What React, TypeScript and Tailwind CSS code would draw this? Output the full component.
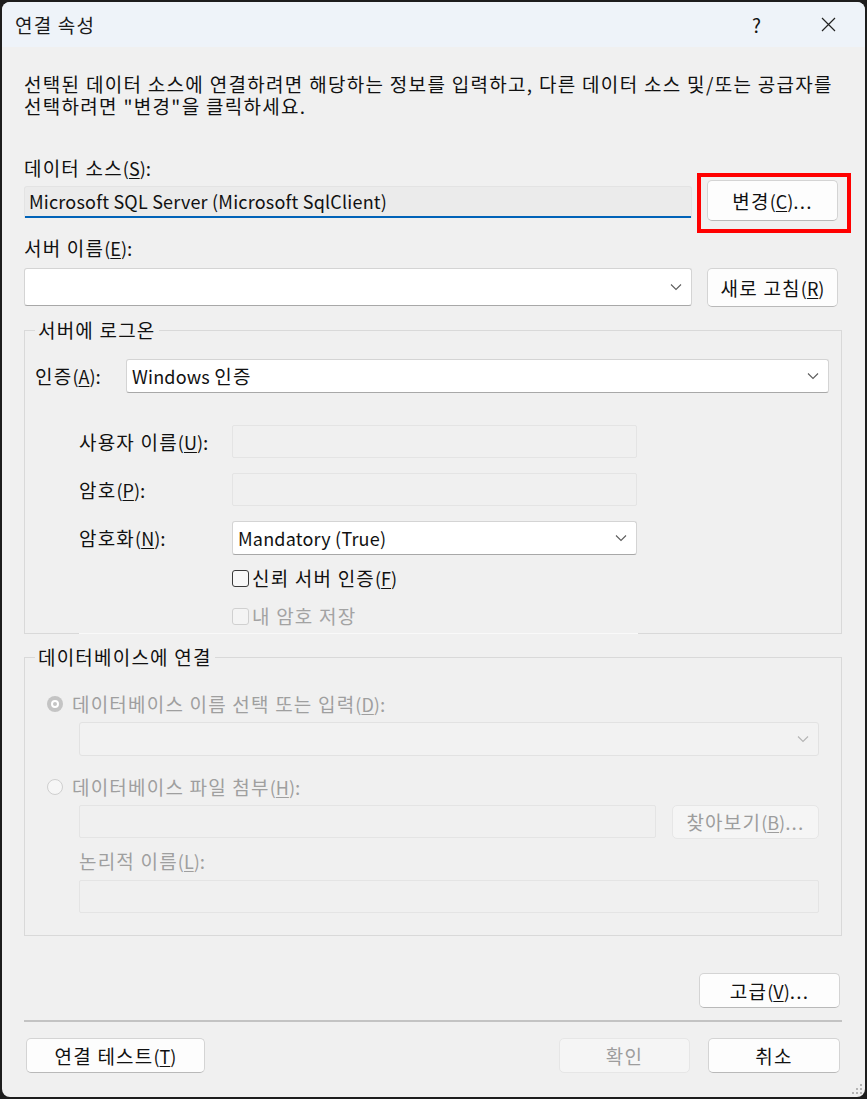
import type { ReactNode } from "react";

// Windows 11 "연결 속성" dialog

// mnemonic key, e.g. (S) with underlined letter
const K = ({ c }: { c: string }) => (
  <span className="text-[18px] tracking-normal">
    (<span className="underline underline-offset-2">{c}</span>)
  </span>
);

const Lat = ({ children }: { children: ReactNode }) => (
  <span className="text-[18px] tracking-[0.2px]">{children}</span>
);

const Chevron = ({ dim }: { dim?: boolean }) => (
  <svg width="12" height="8" viewBox="0 0 12 8">
    <path
      d="M1 1.5 L6 6.5 L11 1.5"
      fill="none"
      stroke={dim ? "#b4b4b4" : "#5c5c5c"}
      strokeWidth="1.1"
    />
  </svg>
);

const Button = ({
  children,
  className = "",
  disabled,
}: {
  children: ReactNode;
  className?: string;
  disabled?: boolean;
}) => (
  <div
    className={`flex items-center justify-center rounded-[5px] border ${
      disabled
        ? "border-[#e6e6e6] bg-[#f5f5f5] text-[#9d9d9d]"
        : "border-[#d4d4d4] border-b-[#b9b9b9] bg-[#fdfdfd] text-[#111]"
    } ${className}`}
  >
    {children}
  </div>
);

const Combo = ({
  children,
  className = "",
  disabled,
}: {
  children?: ReactNode;
  className?: string;
  disabled?: boolean;
}) => (
  <div
    className={`flex items-center justify-between rounded-[3px] border pl-[5px] pr-[9px] ${
      disabled
        ? "border-[#e2e2e2] bg-[#f2f2f2]"
        : "border-[#d4d4d4] border-b-[#a8a8a8] bg-white"
    } ${className}`}
  >
    <span className="text-[#111]">{children}</span>
    <Chevron dim={disabled} />
  </div>
);

const Box = ({ className = "" }: { className?: string }) => (
  <div className={`rounded-[2px] border border-[#e4e4e4] bg-[#f0f0f0] ${className}`} />
);

export default function App() {
  return (
    <div className="h-[1099px] w-[867px] bg-[#1d1d1d] p-[2px] font-['Noto_Sans_CJK_KR','Noto_Sans',sans-serif] text-[19px] leading-[22px] tracking-[1.2px] text-[#111]">
      <div className="relative flex h-full flex-col overflow-hidden rounded-[8px] bg-[#f0f0f0]">
        {/* title bar */}
        <div className="flex h-[45px] shrink-0 items-center bg-[#eef3f9] pl-[13px] pr-[29px]">
          <span className="text-[#1b1b1b]">연결 속성</span>
          <span className="ml-auto mr-[60px] text-[19px] tracking-normal">?</span>
          <svg width="15" height="15" viewBox="0 0 15 15">
            <path d="M1 1 L14 14 M14 1 L1 14" stroke="#222" strokeWidth="1.2" />
          </svg>
        </div>

        <div className="flex flex-col pl-[22px] pr-[23px]">
          <p className="mt-[26px] whitespace-nowrap tracking-[1.3px]">
            선택된 데이터 소스에 연결하려면 해당하는 정보를 입력하고, 다른 데이터 소스 및/또는 공급자를
            <br />
            선택하려면 "변경"을 클릭하세요.
          </p>

          <div className="mt-[40px]">
            데이터 소스<K c="S" />:
          </div>
          <div className="mt-[1px] flex items-start">
            <div className="mt-[6px] flex h-[32px] w-[668px] items-center rounded-t-[3px] border border-b-0 border-[#e3e3e3] bg-[#ebebeb] pb-[4px] pl-[4px] shadow-[inset_0_-2px_0_#0063b8]">
              <Lat>Microsoft SQL Server (Microsoft SqlClient)</Lat>
            </div>
            <div className="relative ml-[15px]">
              <Button className="h-[41px] w-[131px]">
                변경<K c="C" />...
              </Button>
              <div className="absolute left-[-10px] top-[-7px] h-[60px] w-[154px] border-[4px] border-[#ff0000]" />
            </div>
          </div>

          <div className="mt-[16px]">
            서버 이름<K c="E" />:
          </div>
          <div className="mt-[9px] flex items-start">
            <Combo className="h-[38px] w-[668px]" />
            <Button className="ml-[15px] h-[39px] w-[131px]">
              새로 고침<K c="R" />
            </Button>
          </div>

          {/* 서버에 로그온 */}
          <fieldset className="relative mt-[12px] border border-[#d9d9d9]">
            <legend className="ml-[10px] px-[3px]">서버에 로그온</legend>
            <div className="flex flex-col pb-[7px]">
              <div className="mt-[18px] flex items-center">
                <span className="w-[101px] pl-[10px]">
                  인증<K c="A" />:
                </span>
                <Combo className="h-[34px] w-[703px]">
                  <Lat>Windows </Lat>인증
                </Combo>
              </div>
              <div className="mt-[32px] flex items-center">
                <span className="w-[207px] pl-[54px]">
                  사용자 이름<K c="U" />:
                </span>
                <Box className="h-[33px] w-[405px]" />
              </div>
              <div className="mt-[15px] flex items-center">
                <span className="w-[207px] pl-[54px]">
                  암호<K c="P" />:
                </span>
                <Box className="h-[33px] w-[405px]" />
              </div>
              <div className="mt-[15px] flex items-center">
                <span className="w-[207px] pl-[54px]">
                  암호화<K c="N" />:
                </span>
                <Combo className="h-[34px] w-[405px]">
                  <Lat>Mandatory (True)</Lat>
                </Combo>
              </div>
              <div className="mt-[13px] flex h-[20px] items-center pl-[207px]">
                <span className="h-[17px] w-[17px] rounded-[3px] border border-[#3a3a3a] bg-[#f8f8f8]" />
                <span className="ml-[3px]">
                  신뢰 서버 인증<K c="F" />
                </span>
              </div>
              <div className="mt-[18px] flex h-[20px] items-center pl-[207px] text-[#a3a3a3]">
                <span className="h-[17px] w-[17px] rounded-[3px] border border-[#d0d0d0] bg-[#f4f4f4]" />
                <span className="ml-[3px]">내 암호 저장</span>
              </div>
            </div>
            <div className="absolute bottom-[-1px] left-[54px] h-[1px] w-[559px] bg-[#f9f9f9]" />
          </fieldset>

          {/* 데이터베이스에 연결 */}
          <fieldset className="mt-[12px] border border-[#d9d9d9]">
            <legend className="ml-[10px] px-[3px]">데이터베이스에 연결</legend>
            <div className="flex flex-col pb-[22px] pl-[54px] text-[#9f9f9f]">
              <div className="ml-[-32px] mt-[26px] flex h-[20px] items-center">
                <span className="flex h-[16px] w-[16px] items-center justify-center rounded-full bg-[#c4c4c4]">
                  <span className="h-[8px] w-[8px] rounded-full border-[2px] border-white bg-[#c4c4c4]" />
                </span>
                <span className="ml-[9px]">
                  데이터베이스 이름 선택 또는 입력<K c="D" />:
                </span>
              </div>
              <Combo disabled className="mt-[8px] h-[34px] w-[740px]" />
              <div className="ml-[-32px] mt-[21px] flex h-[20px] items-center">
                <span className="h-[16px] w-[16px] rounded-full border border-[#cfcfcf] bg-[#f6f6f6]" />
                <span className="ml-[9px]">
                  데이터베이스 파일 첨부<K c="H" />:
                </span>
              </div>
              <div className="mt-[8px] flex items-start">
                <Box className="h-[33px] w-[577px]" />
                <Button disabled className="ml-[16px] h-[34px] w-[147px]">
                  찾아보기<K c="B" />...
                </Button>
              </div>
              <div className="mt-[11px]">
                논리적 이름<K c="L" />:
              </div>
              <Box className="mt-[8px] h-[33px] w-[740px]" />
            </div>
          </fieldset>

          <Button className="mr-[2px] mt-[37px] h-[35px] w-[141px] self-end">
            고급<K c="V" />...
          </Button>

          <div className="mt-[12px] h-[2px] bg-[#c3c3c3]" />

          <div className="mt-[16px] flex items-start">
            <Button className="ml-[2px] h-[35px] w-[179px]">
              연결 테스트<K c="T" />
            </Button>
            <Button disabled className="ml-auto h-[35px] w-[131px]">
              확인
            </Button>
            <Button className="ml-[18px] mr-[2px] h-[35px] w-[132px]">
              취소
            </Button>
          </div>
        </div>

        {/* resize grip */}
        <svg
          className="absolute bottom-[3px] right-[3px]"
          width="10"
          height="10"
          viewBox="0 0 10 10"
        >
          <g fill="#b5b5b5">
            <rect x="8" y="0" width="2" height="2" />
            <rect x="4" y="4" width="2" height="2" />
            <rect x="8" y="4" width="2" height="2" />
            <rect x="0" y="8" width="2" height="2" />
            <rect x="4" y="8" width="2" height="2" />
            <rect x="8" y="8" width="2" height="2" />
          </g>
        </svg>
      </div>
    </div>
  );
}
